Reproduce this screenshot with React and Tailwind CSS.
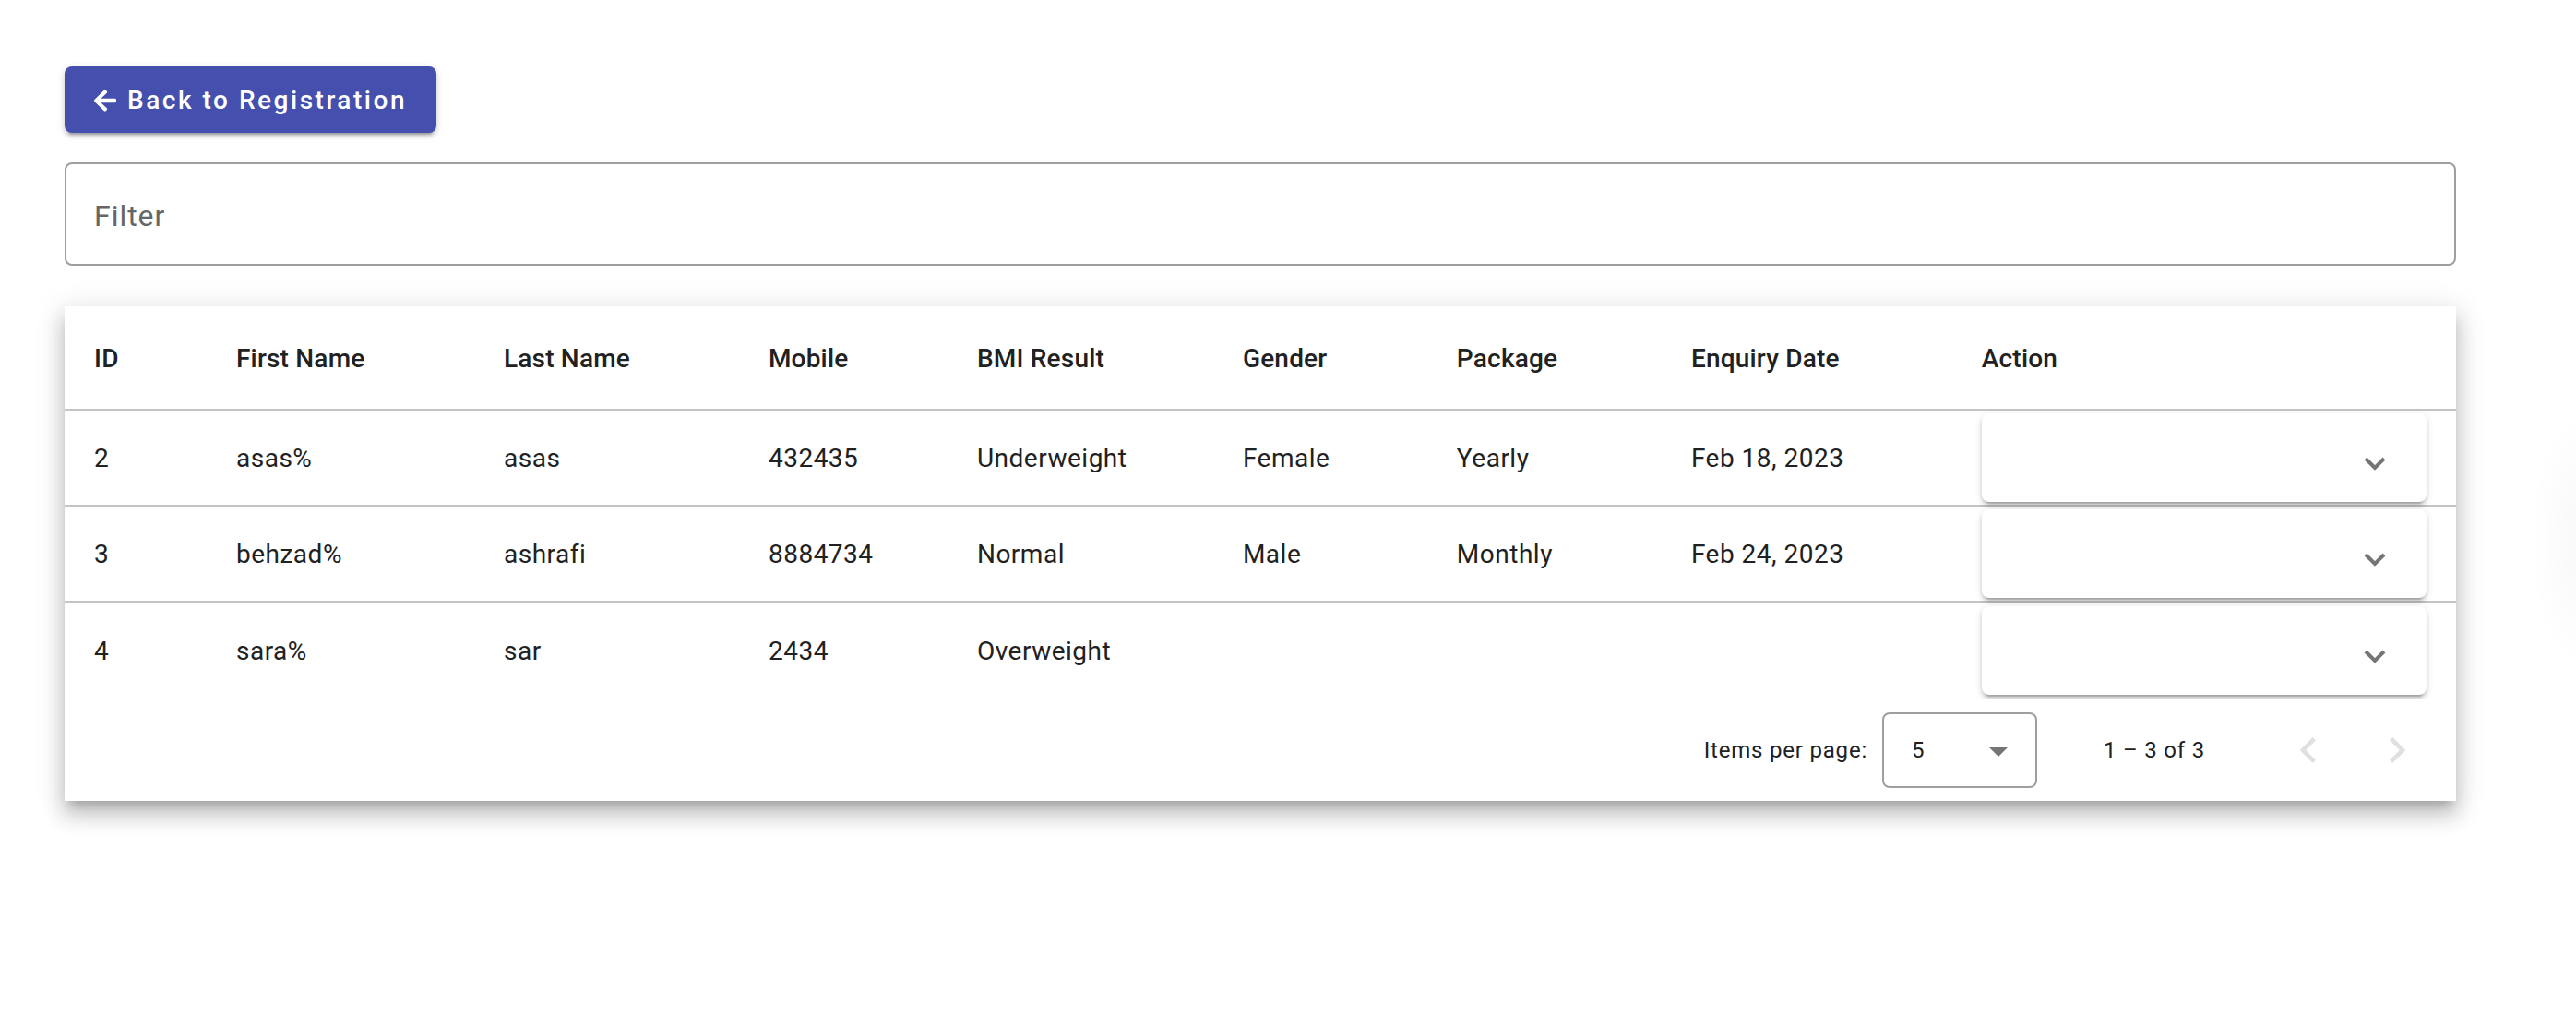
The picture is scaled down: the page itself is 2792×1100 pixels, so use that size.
import { useState } from "react";

const columns = [
  { label: "ID", width: "w-[5.94%]" },
  { label: "First Name", width: "w-[11.19%]" },
  { label: "Last Name", width: "w-[11.07%]" },
  { label: "Mobile", width: "w-[8.72%]" },
  { label: "BMI Result", width: "w-[11.11%]" },
  { label: "Gender", width: "w-[8.95%]" },
  { label: "Package", width: "w-[9.8%]" },
  { label: "Enquiry Date", width: "w-[12.15%]" },
  { label: "Action", width: "w-[21.07%]" },
];

const rows = [
  ["2", "asas%", "asas", "432435", "Underweight", "Female", "Yearly", "Feb 18, 2023"],
  ["3", "behzad%", "ashrafi", "8884734", "Normal", "Male", "Monthly", "Feb 24, 2023"],
  ["4", "sara%", "sar", "2434", "Overweight", "", "", ""],
];

function ArrowLeft() {
  return (
    <svg viewBox="0 0 448 512" className="h-7 w-6 fill-current" aria-hidden="true">
      <path d="M257.5 445.1l-22.2 22.2c-9.4 9.4-24.6 9.4-33.9 0L7 273c-9.4-9.4-9.4-24.6 0-33.9L201.4 44.7c9.4-9.4 24.6-9.4 33.9 0l22.2 22.2c9.5 9.5 9.3 25-.4 34.3L136.6 216H424c13.3 0 24 10.7 24 24v32c0 13.3-10.7 24-24 24H136.6l120.5 114.8c9.8 9.3 10 24.8.4 34.3z" />
    </svg>
  );
}

function ActionPanel({ id }) {
  const [open, setOpen] = useState(false);
  return (
    <button
      type="button"
      aria-label={`Actions for enquiry ${id}`}
      aria-expanded={open}
      onClick={() => setOpen(!open)}
      className="flex h-24 w-full items-center justify-end rounded-lg bg-white pt-3.5 pr-11 shadow-[0_6px_2px_-4px_rgba(0,0,0,0.2),0_4px_4px_0_rgba(0,0,0,0.14),0_2px_10px_0_rgba(0,0,0,0.12)]"
    >
      <svg viewBox="0 0 24 16" className="h-4 w-6 fill-none stroke-[#757575] stroke-4" aria-hidden="true">
        <path d="M2 2l10 10L22 2" />
      </svg>
    </button>
  );
}

export default function App() {
  const [filter, setFilter] = useState("");
  const visible = rows.filter((r) => r.join(" ").toLowerCase().includes(filter.toLowerCase()));

  return (
    <main className="min-h-screen bg-white bg-[radial-gradient(60px_140px_at_calc(100%+10px)_585px,rgba(0,0,0,0.03),transparent)] pt-[72px] pr-[130px] pb-16 pl-[70px] font-[Roboto,sans-serif] text-[28px] text-[#212121]">
      <button
        type="button"
        className="flex h-[72px] items-center gap-3 rounded-lg bg-[#444fae] px-8 pt-0.5 font-medium tracking-[0.09em] text-white shadow-[0_6px_2px_-4px_rgba(0,0,0,0.2),0_4px_4px_0_rgba(0,0,0,0.14),0_2px_10px_0_rgba(0,0,0,0.12)]"
      >
        <ArrowLeft />
        Back to Registration
      </button>

      <input
        type="text"
        aria-label="Filter"
        placeholder="Filter"
        value={filter}
        onChange={(e) => setFilter(e.target.value)}
        className="mt-8 block h-28 w-full rounded-lg border-2 border-[#9e9e9e] bg-white px-[30px] pt-1 text-[32px] tracking-[0.03em] placeholder:text-[#666666] focus:outline-none"
      />

      <section className="mt-11 bg-white shadow-[0_10px_10px_-6px_rgba(0,0,0,0.2),0_16px_20px_2px_rgba(0,0,0,0.14),0_6px_28px_4px_rgba(0,0,0,0.12)]">
        <div className="overflow-hidden">
          <table className="w-full table-fixed border-separate border-spacing-0 text-left">
            <thead>
              <tr className="h-[113px]">
                {columns.map((c) => (
                  <th
                    key={c.label}
                    scope="col"
                    className={`${c.width} border-b-2 border-[#c4c4c4] px-8 pt-0.5 pb-0 font-medium tracking-[0.007em]`}
                  >
                    {c.label}
                  </th>
                ))}
              </tr>
            </thead>
            <tbody>
              {visible.map((r) => (
                <tr key={r[0]} className="group h-[104px]">
                  {r.map((cell, i) => (
                    <td
                      key={columns[i].label}
                      className="border-b-2 border-[#c4c4c4] px-8 pt-0.5 pb-0 tracking-[0.018em] group-last:border-b-0"
                    >
                      {cell}
                    </td>
                  ))}
                  <td className="border-b-2 border-[#c4c4c4] px-8 py-0 group-last:border-b-0">
                    <ActionPanel id={r[0]} />
                  </td>
                </tr>
              ))}
            </tbody>
          </table>
        </div>

        <footer className="flex h-[111px] items-center justify-end pr-4 text-2xl tracking-[0.033em]">
          <label htmlFor="page-size">Items per page:</label>
          <div className="relative ml-4">
            <select
              id="page-size"
              defaultValue="5"
              className="block h-[82px] w-[168px] appearance-none rounded-lg border-2 border-[#9e9e9e] bg-white pl-[30px] tracking-[0.033em]"
            >
              <option>5</option>
              <option>10</option>
              <option>25</option>
            </select>
            <svg
              viewBox="0 0 20 10"
              className="pointer-events-none absolute top-9.5 right-8 h-[10px] w-5 fill-[#757575]"
              aria-hidden="true"
            >
              <path d="M0 0h20L10 10z" />
            </svg>
          </div>
          <p className="mr-16 ml-18">1 – 3 of 3</p>
          <button type="button" disabled aria-label="Previous page" className="flex size-24 items-center justify-center">
            <svg viewBox="0 0 24 24" className="size-14 fill-[#e0e0e0]" aria-hidden="true">
              <path d="M15.41 7.41L14 6l-6 6 6 6 1.41-1.41L10.83 12z" />
            </svg>
          </button>
          <button type="button" disabled aria-label="Next page" className="flex size-24 items-center justify-center">
            <svg viewBox="0 0 24 24" className="size-14 fill-[#e0e0e0]" aria-hidden="true">
              <path d="M10 6L8.59 7.41 13.17 12l-4.58 4.59L10 18l6-6z" />
            </svg>
          </button>
        </footer>
      </section>
    </main>
  );
}
